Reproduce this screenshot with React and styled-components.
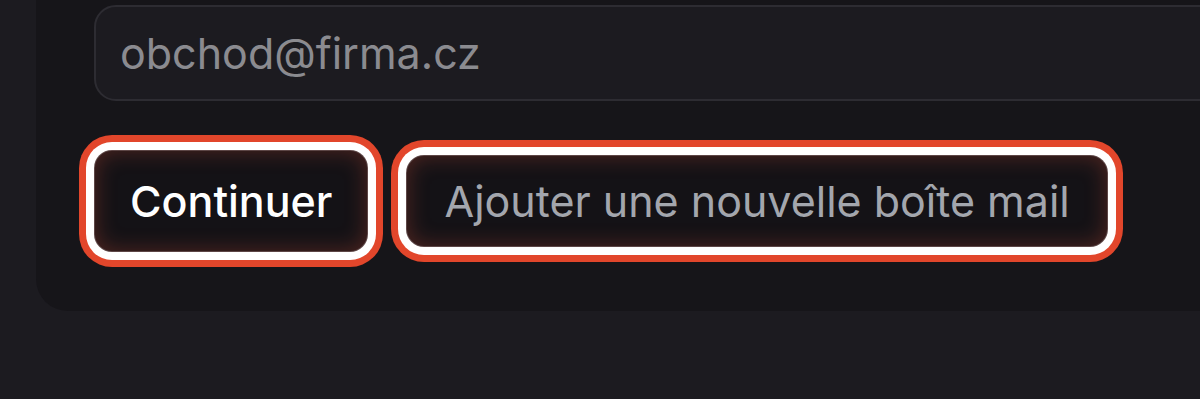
import React from "react";
import styled, { createGlobalStyle } from "styled-components";

const GlobalStyle = createGlobalStyle`
  html, body {
    margin: 0;
    padding: 0;
    background: #1c1b20;
  }
  body {
    font-family: Inter, "Noto Sans", "Liberation Sans", sans-serif;
  }
`;

const Page = styled.div`
  width: 1200px;
  height: 399px;
  overflow: hidden;
  background: #1c1b20;
`;

const Card = styled.section`
  margin: -60px 0 0 36px;
  width: 1500px;
  padding: 65px 0 59px 58px;
  background: #161519;
  border-radius: 32px;
  display: flex;
  flex-direction: column;
  gap: 49px;
  box-sizing: border-box;
`;

const EmailInput = styled.input`
  width: 1300px;
  height: 96px;
  box-sizing: border-box;
  padding: 0 24px;
  border: 2px solid #2d2c32;
  border-radius: 22px;
  background: #1c1b20;
  color: #e8e8ea;
  font-family: inherit;
  font-size: 43px;
  outline: none;

  &::placeholder {
    color: #8b8b90;
  }
`;

const Actions = styled.div`
  display: flex;
  align-items: center;
  gap: 38px;
`;

const Button = styled.button`
  height: ${(p) => (p.$primary ? "102px" : "92px")};
  padding: 0 ${(p) => (p.$primary ? "35px" : "37px")};
  box-sizing: border-box;
  border: 1px solid rgba(230, 170, 160, 0.35);
  border-radius: 18px;
  background: #141216;
  color: ${(p) => (p.$primary ? "#ffffff" : "#a3a6ad")};
  font-family: inherit;
  font-size: 43px;
  font-weight: ${(p) => (p.$primary ? 500 : 400)};
  white-space: nowrap;
  cursor: pointer;
  box-shadow: inset 0 0 22px rgba(214, 80, 55, 0.32),
    0 0 0 8px #ffffff, 0 0 0 15px #e2462b;
`;

export default function App() {
  return (
    <>
      <GlobalStyle />
      <Page>
        <Card>
          <EmailInput type="email" placeholder="obchod@firma.cz" />
          <Actions>
            <Button $primary>Continuer</Button>
            <Button>Ajouter une nouvelle boîte mail</Button>
          </Actions>
        </Card>
      </Page>
    </>
  );
}
